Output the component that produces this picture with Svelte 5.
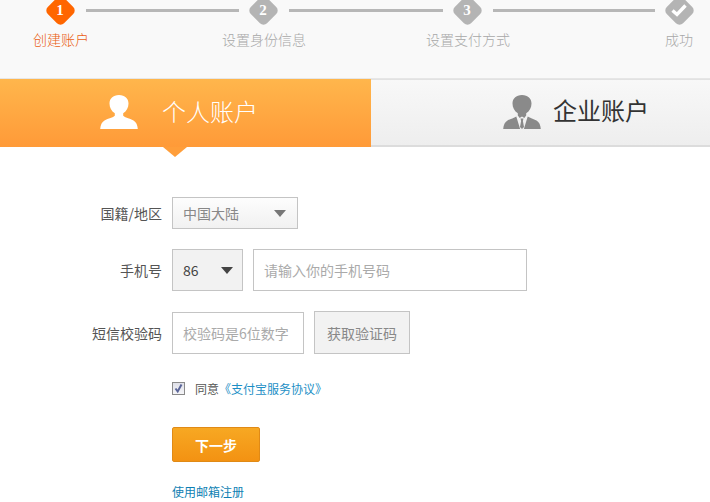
<script>
  const steps = [
    { label: '创建账户', mark: '1', on: true, x: 'a' },
    { label: '设置身份信息', mark: '2', x: 'b' },
    { label: '设置支付方式', mark: '3', x: 'c' },
    { label: '成功', mark: '', x: 'd' }
  ];
</script>

<div class="page">
  <header class="head">
    <div class="steps">
      {#each steps as s, i}
        <div class="step {s.x}" class:on={s.on}>
          <div class="track">
            <span class="gem"><span class="mark">
              {#if s.mark}{s.mark}{:else}
                <svg width="16" height="14" viewBox="0 0 16 14"><path d="M1.500 7.500 6 11.500 14.500 2.500" fill="none" stroke="#fff" stroke-width="3.400"/></svg>
              {/if}
            </span></span>
            {#if i < 3}<span class="line"></span>{/if}
          </div>
          <div class="label">{s.label}</div>
        </div>
      {/each}
    </div>
  </header>

  <nav class="tabs">
    <div class="tab active">
      <svg class="ico" width="38" height="34" viewBox="0 0 38 34">
        <path fill="#fff" d="M19 0c6 0 9.500 3.600 9.500 8.500 0 4-1.900 7.600-5.300 9.800v2.500c1.500 1.700 6.500 2.700 10.300 4.700 2.700 1.500 4 4.500 4.300 8.500H.2c.3-4 1.600-7 4.300-8.500 3.800-2 8.800-3 10.300-4.700v-2.500C11.400 16.100 9.500 12.500 9.500 8.500 9.500 3.600 13 0 19 0z"/>
      </svg>
      <span class="name">个人账户</span>
      <i class="arrow"></i>
    </div>
    <div class="tab other">
      <svg class="ico" width="38" height="34" viewBox="0 0 38 34">
        <path fill="#8a8a8a" d="M19 0c6 0 9.500 3.600 9.500 8.500 0 4-1.900 7.600-5.300 9.800v2.300l-1.900 2.400-2.300-1.500-2.300 1.500-1.900-2.400v-2.300C11.400 16.100 9.500 12.500 9.500 8.500 9.500 3.600 13 0 19 0zM13.300 21.500l3.800 12.500H.2c.3-4 1.600-7 4.300-8.500 3-1.600 6.300-2.400 8.800-4zM24.700 21.500c2.500 1.600 5.800 2.400 8.800 4 2.700 1.500 4 4.500 4.300 8.500H20.900zM17.500 23.500h3l-.6 2.500 1.100 6-2 2-2-2 1.100-6z"/>
      </svg>
      <span class="name">企业账户</span>
    </div>
  </nav>

  <form class="form" onsubmit={(e) => e.preventDefault()}>
    <div class="row r1">
      <span class="key">国籍/地区</span>
      <div class="select country"><span>中国大陆</span><i class="caret light"></i></div>
    </div>
    <div class="row r2">
      <span class="key">手机号</span>
      <div class="select code"><span>86</span><i class="caret"></i></div>
      <div class="input phone">请输入你的手机号码</div>
    </div>
    <div class="row r3">
      <span class="key">短信校验码</span>
      <div class="input sms">校验码是6位数字</div>
      <button type="button" class="get">获取验证码</button>
    </div>
    <div class="row agree">
      <span class="box">
        <svg width="11" height="11" viewBox="0 0 11 11"><path d="M2.500 5.500 4.700 8.500 8.500 1.500" fill="none" stroke="#5a6598" stroke-width="2"/></svg>
      </span>
      <span class="ok">同意</span>
      <a class="proto" href="#a">《支付宝服务协议》</a>
    </div>
    <button type="button" class="next">下一步</button>
    <a class="mail" href="#b">使用邮箱注册</a>
  </form>
</div>

<style>
  :global(body) { margin: 0; background: #fff; }
  .page {
    width: 710px; height: 502px; overflow: hidden;
    font-family: "Noto Sans CJK SC", "Noto Sans", sans-serif;
    font-size: 14px; color: #555;
  }
  .head { height: 78px; background: #f9f9f9; overflow: hidden; border-bottom: 1px solid #e6e6e6; box-sizing: content-box; }
  .steps { display: flex; margin-top: -4px; height: 82px; }
  .step { display: flex; flex-direction: column; flex: none; position: relative; }
  .a { width: 203px; margin-left: 46px; }
  .b { width: 204px; }
  .c { width: 212px; }
  .d { width: 28px; }
  .track { display: flex; align-items: center; height: 28px; }
  .gem {
    flex: none; width: 28px; height: 28px; display: flex; align-items: center; justify-content: center;
    position: relative; color: #fff; font: bold 15px/1 "Liberation Serif", serif;
  }
  .gem::before {
    content: ""; position: absolute; left: 2.500px; top: 3px; width: 23px; height: 23px;
    background: #b4b4b4; transform: rotate(45deg); border-radius: 5px;
  }
  .on .gem::before { background: #ff6600; }
  .mark { position: relative; display: flex; }
  .line { flex: none; height: 3px; background: #b7b7b7; margin-left: 12px; margin-right: 10px; flex-grow: 1; }
  .d .line { display: none; }
  .label {
    position: absolute; top: 31px; left: 15px; transform: translateX(-50%);
    white-space: nowrap; font-size: 14px; line-height: 24px; font-weight: 300; color: #a8a8a8;
  }
  .on .label { color: #ea5f14; }
  .d .label { left: 14px; }

  .tabs { display: flex; height: 68px; }
  .tab { display: flex; align-items: center; font-size: 24px; font-weight: 300; position: relative; }
  .name { position: relative; top: -3px; }
  .active {
    width: 371px; flex: none; color: #fff;
    background: linear-gradient(#ffb64c, #ff9a38);
    gap: 24px; padding-left: 100px; box-sizing: border-box;
  }
  .other {
    flex: 1; color: #333; font-weight: 400;
    background: linear-gradient(#f8f8f8, #eeeeee);
    border-bottom: 2px solid #dcdcdc; border-top: 1px solid #e2e2e2;
    gap: 12px; box-sizing: border-box;
    padding-left: 132px;
  }
  .ico { position: relative; top: -1px; }
  .arrow {
    position: absolute; left: 163px; top: 68px; width: 0; height: 0;
    border-left: 12px solid transparent; border-right: 12px solid transparent;
    border-top: 10px solid #ff9e3a;
  }

  .form { display: flex; flex-direction: column; align-items: flex-start; }
  .row { display: flex; align-items: center; gap: 10px; }
  .key { width: 162px; text-align: right; flex: none; color: #555; margin-right: 0; line-height: 20px; }
  .r1 { margin-top: 50px; height: 32px; }
  .r2 { margin-top: 20px; height: 42px; }
  .r3 { margin-top: 20px; height: 43px; }
  .select, .input, .get {
    box-sizing: border-box; border: 1px solid #c4c4c4; display: flex; align-items: center; font-size: 14px; font-family: inherit;
  }
  .select { justify-content: space-between; }
  .country {
    width: 126px; height: 32px; padding: 0 11px 0 10px; color: #888;
    background: linear-gradient(#fdfdfd, #f1f1f1);
  }
  .code { width: 71px; height: 42px; padding: 0 9px 0 10px; background: #f2f2f2; color: #444; }
  .caret { width: 0; height: 0; border-left: 6.500px solid transparent; border-right: 6.500px solid transparent; border-top: 7px solid #444; }
  .caret.light { border-top-color: #777; }
  .input { background: #fff; color: #aaa; padding-left: 10px; }
  .phone { width: 274px; height: 42px; }
  .sms { width: 132px; height: 42px; margin-top: 1px; }
  .get { width: 96px; height: 43px; background: #f2f2f2; color: #888; justify-content: center; padding: 0; }
  .agree { margin-top: 28px; margin-left: 172px; gap: 0; height: 13px; font-size: 12px; }
  .box {
    width: 13px; height: 13px; box-sizing: border-box; border: 1px solid #8a8a8a;
    background: linear-gradient(#dfe0e8, #f5f5f8); display: flex; align-items: center; justify-content: center;
  }
  .ok { margin-left: 10px; color: #555; }
  .proto { color: #1d8fc6; text-decoration: none; margin-left: 0; }
  .next {
    margin: 32px 0 0 172px; width: 88px; height: 35px; box-sizing: border-box; padding: 0;
    background: linear-gradient(#f7a823, #f39212);
    border: 1px solid #e08a16; border-radius: 2px; color: #fff; font: bold 14px "Noto Sans CJK SC", sans-serif;
  }
  .mail { margin: 21px 0 0 172px; font-size: 12px; line-height: 18px; color: #0e7fb3; text-decoration: none; }
</style>
